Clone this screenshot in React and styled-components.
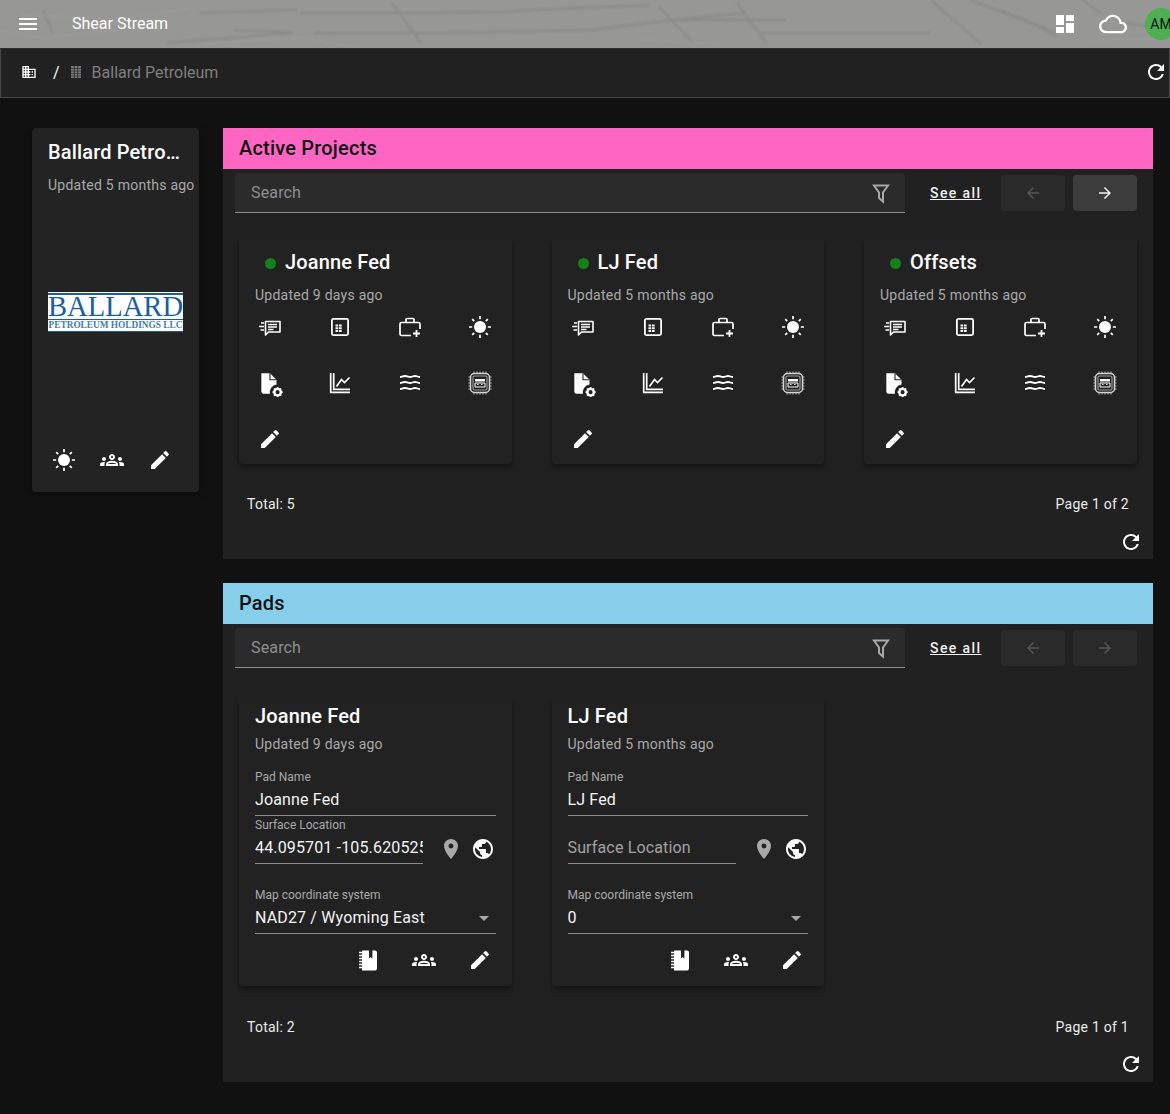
import React from 'react';
import styled, { createGlobalStyle } from 'styled-components';
import {
  MdMenu, MdDashboard, MdOutlineCloud, MdRefresh, MdDomain, MdOutlineGroups, MdEdit,
  MdPlace, MdPublic, MdArrowBack, MdArrowForward, MdArrowDropDown,
} from 'react-icons/md';

const Global = createGlobalStyle`
  html, body { margin: 0; padding: 0; height: 100%; overflow: hidden; background: #111; }
  body { font-family: Roboto, "Liberation Sans", sans-serif; color: #fff; }
`;

const Page = styled.div`
  width: 1170px;
  height: 1114px;
  overflow: hidden;
  background: #111;
`;

const TopBar = styled.header`
  position: relative;
  height: 48px;
  display: flex;
  align-items: center;
  padding: 0 0 0 16px;
  background: #979796;
  overflow: hidden;
  box-sizing: border-box;
`;

const Texture = styled.svg`
  position: absolute;
  inset: 0;
  width: 100%;
  height: 100%;
  filter: blur(0.9px);
`;

const BarContent = styled.div`
  position: relative;
  flex: 1;
  display: flex;
  align-items: center;
  height: 100%;
`;

const AppTitle = styled.span`
  margin-left: 32px;
  font-size: 16px;
  line-height: 24px;
  color: #fff;
  flex: 1;
`;

const BarIcons = styled.div`
  display: flex;
  align-items: center;
  margin-right: -7px;
`;

const CloudSlot = styled.span`
  display: flex;
  margin-left: 22px;
`;

const Avatar = styled.div`
  width: 32px;
  height: 32px;
  border-radius: 50%;
  background: #4caf50;
  color: #111;
  font-size: 14px;
  display: flex;
  align-items: center;
  justify-content: center;
  margin-left: 18px;
  flex: none;
`;

const Crumbs = styled.nav`
  height: 50px;
  box-sizing: border-box;
  display: flex;
  align-items: center;
  background: #212121;
  border: 1px solid #474747;
  border-top-color: #2b2b2b;
  padding: 0 1px 2px 20px;
`;

const CrumbSep = styled.span`
  margin: 0 10px 0 16px;
  font-size: 16px;
  color: #fff;
`;

const CrumbName = styled.span`
  margin-left: 10px;
  font-size: 16px;
  color: #7f7f7f;
  flex: 1;
`;

const Main = styled.main`
  display: flex;
  align-items: flex-start;
  gap: 24px;
  padding: 30px 17px 0 32px;
`;

const SideCard = styled.aside`
  width: 167px;
  height: 364px;
  flex: none;
  box-sizing: border-box;
  background: #232323;
  border-radius: 4px;
  padding: 12px 0 0 16px;
  display: flex;
  flex-direction: column;
  box-shadow: 0 2px 6px rgba(0, 0, 0, 0.5);
`;

const SideTitle = styled.div`
  width: 135px;
  font-size: 20px;
  font-weight: 500;
  line-height: 24px;
  letter-spacing: 0.15px;
  white-space: nowrap;
  overflow: hidden;
  text-overflow: ellipsis;
`;

const Updated = styled.div`
  font-size: 14px;
  line-height: 20px;
  letter-spacing: 0.25px;
  color: #a9a9a9;
  white-space: nowrap;
  margin-top: ${(p) => p.$top || 0}px;
`;

const Logo = styled.div`
  width: 135px;
  height: 40px;
  margin-top: 97px;
  box-sizing: border-box;
  padding-top: 1px;
  background: #fff;
  color: #1a5f9e;
  font-family: "Liberation Serif", serif;
  text-align: center;
  white-space: nowrap;
`;

const LogoBig = styled.div`
  height: 27px;
  box-sizing: border-box;
  border-top: 2px solid #1a5f9e;
  border-bottom: 1px solid #1a5f9e;
  font-size: 28.600px;
  line-height: 24px;
`;

const LogoSmall = styled.div`
  height: 12px;
  box-sizing: border-box;
  border-bottom: 1.500px solid #1a5f9e;
  font-size: 9.300px;
  line-height: 10px;
  font-weight: 700;
  color: #3f7db5;
`;

const SideIcons = styled.div`
  display: flex;
  gap: 24px;
  margin: 116px 0 0 4px;
  font-size: 24px;
`;

const Column = styled.div`
  width: 930px;
  display: flex;
  flex-direction: column;
  gap: 24px;
`;

const Section = styled.section`
  background: #212121;
  height: ${(p) => p.$height}px;
  display: flex;
  flex-direction: column;
`;

const SectionTitle = styled.h2`
  margin: 0;
  height: 41px;
  box-sizing: border-box;
  padding: 0 16px 2px;
  display: flex;
  align-items: center;
  background: ${(p) => p.$color};
  color: #111;
  font-size: 20px;
  font-weight: 500;
  letter-spacing: 0.2px;
`;

const Toolbar = styled.div`
  display: flex;
  align-items: center;
  padding: 4px 16px 0 12px;
`;

const Search = styled.div`
  width: 670px;
  height: 40px;
  box-sizing: border-box;
  background: #2b2b2b;
  border-bottom: 1px solid #8c8c8c;
  border-radius: 4px 4px 0 0;
  display: flex;
  align-items: center;
  justify-content: space-between;
  padding: 0 12px 0 16px;
  color: #8f8f8f;
  font-size: 16px;
  letter-spacing: 0.15px;
`;

const SeeAll = styled.a`
  margin: 0 20px 0 25px;
  width: 51px;
  font-size: 14px;
  font-weight: 500;
  letter-spacing: 1.400px;
  color: #f2f2f2;
  text-decoration: underline;
  white-space: nowrap;
`;

const PageButton = styled.div`
  width: 64px;
  height: 36px;
  margin: ${(p) => (p.$last ? '0 0 0 8px' : '0')};
  border-radius: 4px;
  display: flex;
  align-items: center;
  justify-content: center;
  font-size: 18px;
  background: ${(p) => (p.$on ? '#3c3c3c' : '#2a2a2a')};
  color: ${(p) => (p.$on ? '#f2f2f2' : '#555')};
`;

const Cards = styled.div`
  display: flex;
  gap: 40px;
  padding: ${(p) => p.$top}px 16px 0;
`;

const Card = styled.article`
  width: 272.500px;
  height: ${(p) => p.$height}px;
  box-sizing: border-box;
  background: #222;
  border-radius: 0 0 4px 4px;
  padding: 0 16px;
  box-shadow: 0 3px 6px rgba(0, 0, 0, 0.45);
  clip-path: inset(0 -8px -10px -8px);
`;

const ProjectTitle = styled.div`
  display: flex;
  align-items: center;
  height: 24px;
  margin: 10px 0 0 10px;
  gap: 9px;
  font-size: 20px;
  font-weight: 500;
  letter-spacing: 0.15px;
`;

const Dot = styled.span`
  width: 11px;
  height: 11px;
  border-radius: 50%;
  background: #15801a;
  margin-top: 2px;
`;

const IconGrid = styled.div`
  display: grid;
  grid-template-columns: repeat(4, 70px);
  grid-template-rows: 24px 24px 24px;
  row-gap: 32px;
  margin: 10px 0 0 -20px;
  justify-items: center;
  font-size: 24px;
`;

const Footer = styled.div`
  display: flex;
  justify-content: space-between;
  padding: 0 24px;
  margin-top: ${(p) => p.$top}px;
  font-size: 14px;
  line-height: 20px;
  letter-spacing: 0.25px;
  color: #ececec;
`;

const Reload = styled.div`
  display: flex;
  justify-content: flex-end;
  padding-right: 10px;
  margin-top: ${(p) => p.$top}px;
  font-size: 24px;
  line-height: 0;
`;

const PadTitle = styled.div`
  margin-top: 4px;
  font-size: 20px;
  font-weight: 500;
  line-height: 24px;
  letter-spacing: 0.15px;
`;

const FieldLabel = styled.div`
  font-size: 12px;
  line-height: 14px;
  color: #a9a9a9;
  margin-top: ${(p) => p.$top || 0}px;
`;

const FieldValue = styled.div`
  height: 32px;
  box-sizing: border-box;
  border-bottom: 1px solid #8c8c8c;
  display: flex;
  align-items: center;
  justify-content: space-between;
  font-size: 16px;
  letter-spacing: 0.15px;
  color: ${(p) => (p.$empty ? '#a2a2a2' : '#f4f4f4')};
  white-space: nowrap;
  overflow: hidden;
`;

const LocationRow = styled.div`
  display: flex;
  align-items: flex-end;
`;

const LocationField = styled.div`
  width: 168px;
  flex: none;
`;

const LocationIcons = styled.div`
  display: flex;
  gap: 8px;
  margin: 0 0 3px 16px;
  font-size: 24px;
  line-height: 0;
`;

const CardActions = styled.div`
  display: flex;
  justify-content: flex-end;
  gap: 32px;
  margin-top: 14px;
  padding-right: 4px;
  font-size: 24px;
  line-height: 0;
`;

// icons that the packages don't have in this exact form
const Glyph = ({ children, size = 24 }) => (
  <svg width={size} height={size} viewBox="0 0 24 24" fill="none">{children}</svg>
);

const SunIcon = () => (
  <Glyph>
    <circle cx="12" cy="12" r="6" fill="#fff" />
    <path d="M12 1v3.200M12 19.800V23M1 12h3.200M19.800 12H23M4.200 4.200l2 2M17.800 17.800l2 2M19.800 4.200l-2 2M6.200 17.800l-2 2" stroke="#fff" strokeWidth="1.700" />
  </Glyph>
);

const ReviewsIcon = () => (
  <Glyph>
    <path d="M7.500 6.500h14.500v10.500H10.500L7.500 20z" stroke="#fff" strokeWidth="1.600" strokeLinejoin="round" />
    <path d="M10 9.500h9M10 12h9M10 14.500h5.500" stroke="#fff" strokeWidth="1.300" />
    <path d="M3 8h3M1 11.500h5M2.500 15h3.500" stroke="#fff" strokeWidth="1.600" />
  </Glyph>
);

const SheetIcon = () => (
  <Glyph>
    <rect x="3.900" y="3.900" width="16.200" height="16.200" rx="1.500" stroke="#fff" strokeWidth="1.800" />
    <path d="M7.500 9.500h2.700v2H7.500zM11 9.500h2.700v2H11zM7.500 12.200h2.700v2H7.500zM11 12.200h2.700v2H11zM7.500 14.900h2.700v2H7.500zM11 14.900h2.700v2H11z" fill="#fff" />
  </Glyph>
);

const CasePlusIcon = () => (
  <Glyph>
    <path d="M13 20.500H3.500A1.500 1.500 0 0 1 2 19V9a1.500 1.500 0 0 1 1.500-1.500h17A1.500 1.500 0 0 1 22 9v5" stroke="#fff" strokeWidth="1.700" />
    <path d="M8 7.500V4.500a1 1 0 0 1 1-1h6a1 1 0 0 1 1 1v3" stroke="#fff" strokeWidth="1.700" />
    <path d="M18.500 15v7M15 18.500h7" stroke="#fff" strokeWidth="1.800" />
  </Glyph>
);

const FileGearIcon = () => (
  <Glyph size={26}>
    <path d="M4 2h8l6 6v4.500a7 7 0 0 0-6 8.500H6a2 2 0 0 1-2-2V2z" fill="#fff" />
    <path d="M12 2v6h6" stroke="#222" strokeWidth="1" />
    <circle cx="19" cy="19.500" r="3" stroke="#fff" strokeWidth="2.200" />
    <path d="M19 14.800v2M19 22.200v2M14.300 19.500h2M21.700 19.500h2M15.700 16.200l1.400 1.400M20.900 21.400l1.400 1.400M22.300 16.200l-1.400 1.400M17.100 21.400l-1.400 1.400" stroke="#fff" strokeWidth="1.500" />
  </Glyph>
);

const ChartIcon = () => (
  <Glyph>
    <path d="M2.700 2v19.300H22M5.700 2v16.300H22" stroke="#fff" strokeWidth="1.700" />
    <path d="M8.500 15.500l5-7 3 3 5-5" stroke="#fff" strokeWidth="1.700" />
  </Glyph>
);

const WavesIcon = () => (
  <Glyph>
    <path d="M2 6c2 0 2-1 5-1s3 1 5 1 3-1 5-1 3 1 5 1M2 12c2 0 2-1 5-1s3 1 5 1 3-1 5-1 3 1 5 1M2 18c2 0 2-1 5-1s3 1 5 1 3-1 5-1 3 1 5 1" stroke="#fff" strokeWidth="1.800" />
  </Glyph>
);

const ChipIcon = () => (
  <Glyph>
    <rect x="2.500" y="2.500" width="19" height="19" rx="4" stroke="#d8d8d8" strokeWidth="1.500" />
    <rect x="5" y="5" width="14" height="14" rx="1.500" stroke="#9b9b9b" strokeWidth="1.200" />
    <path d="M7 8h10v2.500H7z" fill="#fff" />
    <path d="M7 12h10v4H7z" stroke="#fff" strokeWidth="1" />
    <path d="M9 13.500h1.500M13 13.500h1.500" stroke="#fff" strokeWidth="1.200" />
    <path d="M6 .5v2M9 .5v2M12 .5v2M15 .5v2M18 .5v2M6 21.500v2M9 21.500v2M12 21.500v2M15 21.500v2M18 21.500v2M.5 6h2M.5 9h2M.5 12h2M.5 15h2M.5 18h2M21.500 6h2M21.500 9h2M21.500 12h2M21.500 15h2M21.500 18h2" stroke="#bdbdbd" strokeWidth="1" />
  </Glyph>
);

const NotebookIcon = () => (
  <Glyph>
    <path d="M6 2.500h7v8l1.700-1.500 1.700 1.500v-8H19a2 2 0 0 1 2 2V20.500a2 2 0 0 1-2 2H6z" fill="#fff" />
    <path d="M3 4.500h3M3 7.500h3M3 10.500h3M3 13.500h3M3 16.500h3M3 19.500h3" stroke="#fff" strokeWidth="1.600" />
  </Glyph>
);

const FilterIcon = () => (
  <Glyph>
    <path d="M5 4.500h14l-5 7v9l-4-3.500v-5.500z" stroke="#a8a8a8" strokeWidth="2" />
  </Glyph>
);

const TowerIcon = () => (
  <svg width="12" height="14" viewBox="0 0 12 14">
    <path d="M1 1h10v12H1z" fill="#7b7b7b" />
    <path d="M1 3.500h10M1 6h10M1 8.500h10M1 11h10M4.300 1v12M7.700 1v12" stroke="#262626" strokeWidth="0.700" />
  </svg>
);

const ProjectCard = ({ name, updated }) => (
  <Card $height={224}>
    <ProjectTitle><Dot />{name}</ProjectTitle>
    <Updated $top={11}>{updated}</Updated>
    <IconGrid>
      <ReviewsIcon />
      <SheetIcon />
      <CasePlusIcon />
      <SunIcon />
      <FileGearIcon />
      <ChartIcon />
      <WavesIcon />
      <ChipIcon />
      <MdEdit />
    </IconGrid>
  </Card>
);

const PadCard = ({ name, updated, location, system }) => (
  <Card $height={286}>
    <PadTitle>{name}</PadTitle>
    <Updated $top={6}>{updated}</Updated>
    <FieldLabel $top={16}>Pad Name</FieldLabel>
    <FieldValue>{name}</FieldValue>
    <LocationRow>
      <LocationField>
        <FieldLabel $top={2}>{location ? 'Surface Location' : '\u00a0'}</FieldLabel>
        <FieldValue $empty={!location}>{location || 'Surface Location'}</FieldValue>
      </LocationField>
      <LocationIcons>
        <MdPlace color="#a8a8a8" />
        <MdPublic />
      </LocationIcons>
    </LocationRow>
    <FieldLabel $top={24}>Map coordinate system</FieldLabel>
    <FieldValue>
      {system}
      <MdArrowDropDown size={24} color="#a8a8a8" />
    </FieldValue>
    <CardActions>
      <NotebookIcon />
      <MdOutlineGroups />
      <MdEdit />
    </CardActions>
  </Card>
);

const SearchBar = ({ nextOn }) => (
  <Toolbar>
    <Search>Search<FilterIcon /></Search>
    <SeeAll>See all</SeeAll>
    <PageButton><MdArrowBack /></PageButton>
    <PageButton $last $on={nextOn}><MdArrowForward /></PageButton>
  </Toolbar>
);

export default function App() {
  return (
    <Page>
      <Global />
      <TopBar>
        <Texture viewBox="0 0 1170 48" fill="none">
          <g stroke="#7d7d7c" strokeWidth="1.800" opacity="0.5">
            <path d="M300 13L421 13 504 12 552 9 650 5" />
            <path d="M315 33L445 33 591 30 674 20 746 13" />
            <path d="M392 3L421 43M659 7L693 43M737 3L766 43M931 0L980 43" />
            <path d="M970 0L1057 33M680 20L785 20M761 33L931 33" />
            <path d="M43 10L53 33M167 43L290 33M200 13L297 10M233 30L293 33" />
            <path d="M1000 10L1033 23 1057 37M1083 0L1100 13M1127 23L1170 30" />
          </g>
          <g stroke="#a4a4a3" strokeWidth="1.500" opacity="0.5">
            <path d="M0 30L40 38 120 30M20 14L120 20 190 8M200 44L300 38 360 48M640 40L720 44M1090 40L1170 38" />
          </g>
        </Texture>
        <BarContent>
          <MdMenu size={24} color="#fff" />
          <AppTitle>Shear Stream</AppTitle>
          <BarIcons>
            <MdDashboard size={24} color="#fff" />
            <CloudSlot><MdOutlineCloud size={28} color="#fff" /></CloudSlot>
            <Avatar>AM</Avatar>
          </BarIcons>
        </BarContent>
      </TopBar>

      <Crumbs>
        <MdDomain size={16} color="#fff" />
        <CrumbSep>/</CrumbSep>
        <TowerIcon />
        <CrumbName>Ballard Petroleum</CrumbName>
        <MdRefresh size={24} color="#fff" />
      </Crumbs>

      <Main>
        <SideCard>
          <SideTitle>Ballard Petroleum</SideTitle>
          <Updated $top={11}>Updated 5 months ago</Updated>
          <Logo>
            <LogoBig>BALLARD</LogoBig>
            <LogoSmall>PETROLEUM HOLDINGS LLC</LogoSmall>
          </Logo>
          <SideIcons>
            <SunIcon />
            <MdOutlineGroups />
            <MdEdit />
          </SideIcons>
        </SideCard>

        <Column>
          <Section $height={431}>
            <SectionTitle $color="#ff66c4">Active Projects</SectionTitle>
            <SearchBar nextOn />
            <Cards $top={27}>
              <ProjectCard name="Joanne Fed" updated="Updated 9 days ago" />
              <ProjectCard name="LJ Fed" updated="Updated 5 months ago" />
              <ProjectCard name="Offsets" updated="Updated 5 months ago" />
            </Cards>
            <Footer $top={30}><span>Total: 5</span><span>Page 1 of 2</span></Footer>
            <Reload $top={16}><MdRefresh /></Reload>
          </Section>

          <Section $height={499}>
            <SectionTitle $color="#87ceeb">Pads</SectionTitle>
            <SearchBar />
            <Cards $top={32}>
              <PadCard name="Joanne Fed" updated="Updated 9 days ago" location="44.095701 -105.620525" system="NAD27 / Wyoming East" />
              <PadCard name="LJ Fed" updated="Updated 5 months ago" system="0" />
            </Cards>
            <Footer $top={31}><span>Total: 2</span><span>Page 1 of 1</span></Footer>
            <Reload $top={15}><MdRefresh /></Reload>
          </Section>
        </Column>
      </Main>
    </Page>
  );
}
